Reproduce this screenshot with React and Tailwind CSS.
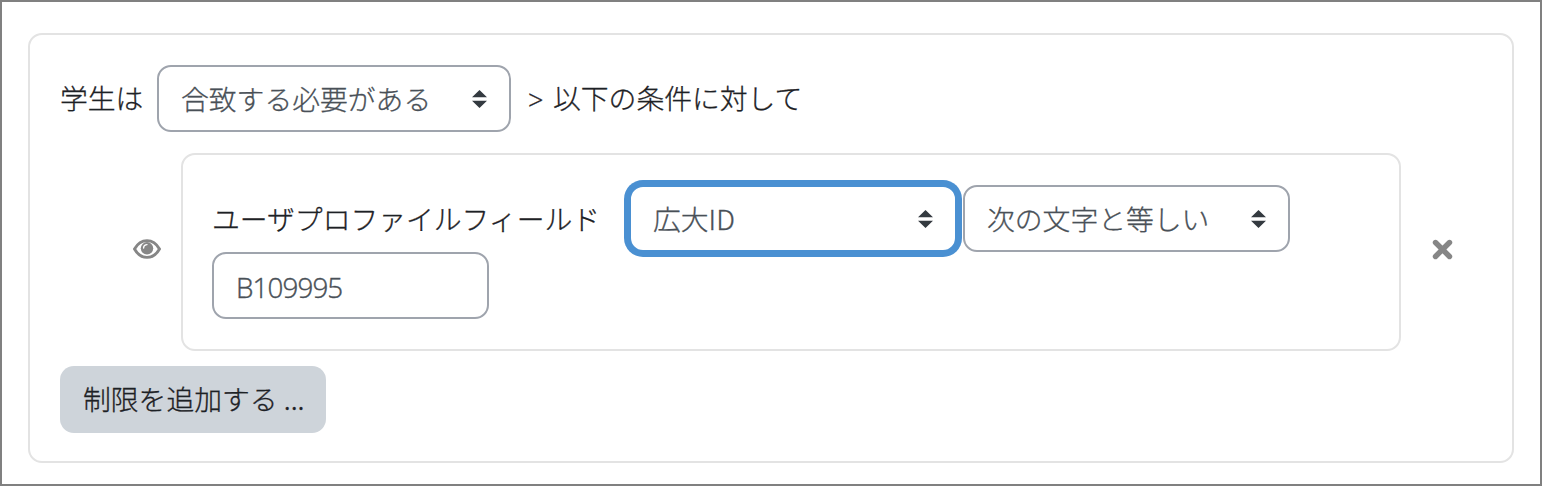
import React from "react";

function Caret() {
  return (
    <svg viewBox="0 0 4 5" className="h-[18px] w-[15px] shrink-0" preserveAspectRatio="none" fill="#343a40">
      <path d="M2 0L0 2h4zm0 5L0 3h4z" />
    </svg>
  );
}

function Select({ label, className }) {
  return (
    <div
      role="combobox"
      aria-expanded="false"
      aria-label={label}
      className={`flex h-[67px] shrink-0 items-center justify-between rounded-[14px] border-2 bg-white pr-[22px] pl-[22px] text-[#495057] ${className}`}
    >
      <span className="pb-[2px]">{label}</span>
      <Caret />
    </div>
  );
}

export default function App() {
  return (
    <div className="h-[486px] w-[1542px] border-2 border-[#808080] bg-white pt-[31px] pl-[26px] font-['Noto_Sans_CJK_JP','Noto_Sans',sans-serif] text-[27.8px] leading-[40px] font-light whitespace-nowrap text-[#1d2125] [-webkit-text-stroke:0.3px]">
      <div className="h-[430px] w-[1486px] rounded-[14px] border-2 border-[#e3e3e3] pt-[30px] pl-[30px]">
        <div className="flex items-center">
          <span className="w-[97px] pb-[3px]">学生は</span>
          <Select label="合致する必要がある" className="w-[354px] border-[#9fa4ad]" />
          <span className="ml-[17px] w-[16px] pt-[3px] font-['Open_Sans','Noto_Sans',sans-serif] text-[27px]">&gt;</span>
          <span className="ml-[9px] pb-[3px]">以下の条件に対して</span>
        </div>

        <div className="mt-[21px] flex items-center">
          <svg viewBox="0 0 28 20" className="mb-[6px] ml-[73px] h-[20px] w-[28px] shrink-0" fill="none">
            <path d="M1.5 10C4.3 5 8.8 1.6 14 1.6S23.7 5 26.5 10C23.7 15 19.2 18.4 14 18.4S4.3 15 1.5 10Z" stroke="#868686" strokeWidth="2.9" />
            <circle cx="14" cy="9.3" r="6.2" fill="#868686" />
            <path d="M10.6 9A3.4 3.4 0 0 1 14 5.6" stroke="#fff" strokeWidth="1.4" strokeLinecap="round" />
          </svg>
          <div className="ml-[20px] h-[198px] w-[1220px] rounded-[14px] border-2 border-[#e3e3e3] pt-[30px] pl-[29px]">
            <div className="flex items-center">
              <span className="w-[417px] pb-[2px]">ユーザプロファイルフィールド</span>
              <Select label="広大ID" className="w-[328px] border-[#4a90d2] ring-[5px] ring-[#4a90d2]" />
              <Select label="次の文字と等しい" className="ml-[6px] w-[327px] border-[#9fa4ad]" />
            </div>
            <input
              type="text"
              defaultValue="B109995"
              className="block h-[67px] w-[277px] rounded-[14px] border-2 border-[#9fa4ad] bg-white px-[22px] pt-[3px] font-['Open_Sans','Noto_Sans',sans-serif] text-[27.8px] font-light tracking-[-0.9px] text-[#495057] [-webkit-text-stroke:0.4px]"
            />
          </div>
          <svg viewBox="0 0 22 22" className="mb-[5px] ml-[31px] h-[22px] w-[22px] shrink-0">
            <path d="M3.5 3.5L17.5 17.5M17.5 3.5L3.5 17.5" stroke="#868686" strokeWidth="5.4" strokeLinecap="round" />
          </svg>
        </div>

        <button type="button" className="mt-[15px] flex h-[67px] w-[266px] items-center rounded-[14px] bg-[#ced4da] pb-[3px] pl-[23px]">
          制限を追加する ...
        </button>
      </div>
    </div>
  );
}
